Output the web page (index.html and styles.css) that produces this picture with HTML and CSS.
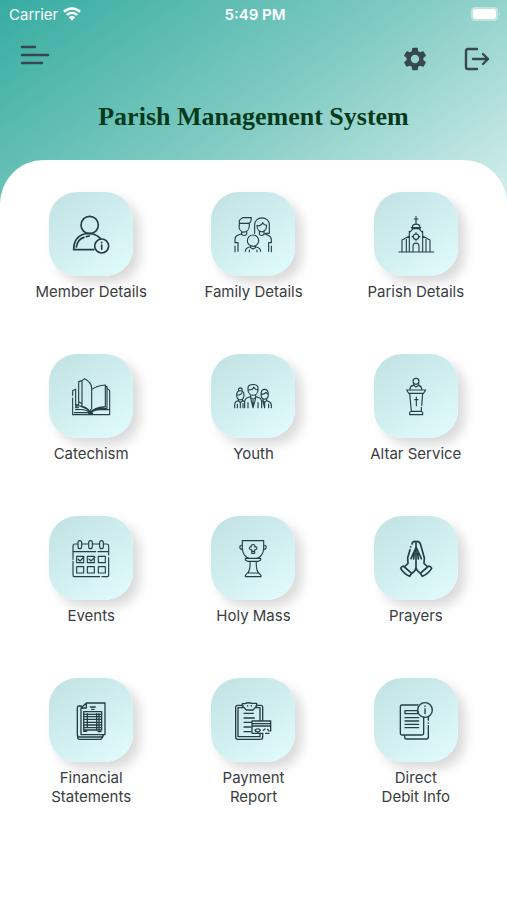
FILE: index.html
```html
<!DOCTYPE html>
<html lang="en">
<head>
<meta charset="utf-8">
<meta name="viewport" content="width=device-width, initial-scale=1">
<title>Parish Management System</title>
<link rel="stylesheet" href="styles.css">
</head>
<body>
<header class="header">
  <div class="status">
    <span class="carrier">Carrier
      <svg class="wifi" viewBox="0 0 56 42" aria-hidden="true"><path d="M3 14a36 36 0 0 1 50 0" stroke-width="8"/><path d="M12 24a23 23 0 0 1 32 0" stroke-width="7"/><path class="solid" d="M18 31q10-8 20 0L28 42z"/></svg>
    </span>
    <span class="time">5:49 PM</span>
    <svg class="battery" viewBox="0 0 30 14" aria-hidden="true"><rect class="shell" x="0" y="0" width="27" height="14" rx="4"/><rect class="charge" x="2" y="2" width="23" height="10" rx="3"/><path class="shell-tip" d="M28 5q2 2 0 4z"/></svg>
  </div>
  <div class="toolbar">
    <button class="tool menu" type="button" aria-label="Menu"><svg viewBox="0 0 30 20"><path d="M2 2h13M2 10h26M2 18h20"/></svg></button>
    <button class="tool settings" type="button" aria-label="Settings"><svg viewBox="0 0 24 24"><path d="M19.14 12.94c.04-.3.06-.61.06-.94s-.02-.64-.07-.94l2.03-1.58a.49.49 0 0 0 .12-.61l-1.92-3.32a.49.49 0 0 0-.59-.22l-2.39.96a7 7 0 0 0-1.62-.94l-.36-2.54a.48.48 0 0 0-.48-.41h-3.84a.47.47 0 0 0-.47.41l-.36 2.54a7.4 7.4 0 0 0-1.62.94l-2.39-.96a.48.48 0 0 0-.59.22L2.74 8.87a.47.47 0 0 0 .12.61l2.03 1.58a6 6 0 0 0 0 1.88l-2.03 1.58a.49.49 0 0 0-.12.61l1.92 3.32c.12.22.37.29.59.22l2.39-.96c.5.38 1.03.7 1.62.94l.36 2.54c.05.24.24.41.48.41h3.84c.24 0 .44-.17.47-.41l.36-2.54a7.4 7.4 0 0 0 1.62-.94l2.39.96c.22.08.47 0 .59-.22l1.92-3.32a.47.47 0 0 0-.12-.61zM12 15.6a3.6 3.6 0 1 1 0-7.2 3.6 3.6 0 0 1 0 7.2z"/></svg></button>
    <button class="tool logout" type="button" aria-label="Log out"><svg viewBox="0 0 26 24"><path d="M13 2H4Q2 2 2 4v16q0 2 2 2h9M9 12h15M19 7l5 5-5 5"/></svg></button>
  </div>
  <h1 class="title">Parish Management System</h1>
</header>
<main class="sheet">
  <nav class="grid" aria-label="Sections">
    <a class="item" href="#member"><span class="tile"><svg viewBox="129 105 114 114"><g stroke-width="5"><circle cx="182" cy="135" r="26"/><path d="M194 209H134c0-54 57-60 81-33M142 201c3-17 12-26 23-29M172 170l9-2"/><circle cx="218" cy="198" r="21"/><path d="M218 195v13M218 187v1"/></g></svg></span><span class="label">Member Details</span></a>
    <a class="item" href="#family"><span class="tile"><svg viewBox="120 105 114 114"><path d="M136 137v-16l10-8h26c0 10-3 17-10 17h-26M135 137c0 25 30 27 31-1v-6M143 154v9q7 7 15 0v-9M143 161l-12 5q-8 3-8 13v9h9v26M123 198v17M182 160v-26c0-27 44-27 44 0v26h-12M189 136c0 25 29 27 29-1M189 137q13 1 17-9 4 8 12 8M196 155v8q7 7 14 0v-8M213 162l12 5q7 3 7 13v8h-8v26M232 198v17"/><circle cx="177" cy="182" r="17"/><path d="M170 198v5q7 7 14 0v-5M167 201q-13 3-13 13M187 201q13 3 13 13M166 210v5M189 210v5"/></svg></span><span class="label">Family Details</span></a>
    <a class="item" href="#parish"><span class="tile"><svg viewBox="126 105 114 114"><path d="M183 110v22M178 117h11M172 148v-5c0-14 23-14 23 0v5M169 143h28M163 158l12-12h16l12 12M163 154v62M203 154v62M132 216h104M141 216v-36l21-11M225 216v-36l-21-11M154 178v38M213 178v38M174 216v-17c0-13 18-13 18 0v17"/><circle cx="183" cy="170" r="8"/><path d="M183 158v4M183 178v4M171 170h4M191 170h4"/></svg></span><span class="label">Parish Details</span></a>

    <a class="item" href="#catechism"><span class="tile"><svg viewBox="129 96 114 114"><path d="M185 203q-8-12-26-17v-79l8-6q20 11 21 27v64M159 107l-10 3v60l10 6M149 117v62q-8 0-9 3 34 0 45 21M140 133l-9 4v14M131 159v50h111v-73l-8-6M140 133v55h8M185 203q8-15 44-18v-65q-27 2-41 14M229 125l5-1v66h-20q-22 0-29 13M140 194q35-3 41 9h-45M188 203q6-9 25-9h26M185 194v15M179 205h12"/></svg></span><span class="label">Catechism</span></a>
    <a class="item" href="#youth"><span class="tile"><svg viewBox="120 96 114 114"><path d="M162 135v-6c0-14 30-14 30 0v6c0 21-30 21-30 0 12 0 17-4 17-9 3 6 6 9 13 9M170 150v7l7 6 8-6v-7M168 155l-11 5q-5 3-5 12v16M187 155l11 5q5 3 5 12v16M162 173v15M192 173v15M170 160l7 28 8-28M177 166v22M128 150c0-17 22-17 22 0 0 19-22 19-22 0 10 0 14-3 16-7M134 137c-4-11 14-11 10 0M134 163v5l5 5 6-5v-5M132 167l-7 4q-3 3-3 9v8M147 167l5 3M130 178v10M147 176v12M139 173v15M201 148c0-20 22-20 22 0 0 19-22 19-22 0q12 0 15-6 3 5 7 6M207 161v6l5 5 6-5v-6M219 167l8 4q5 3 5 10v7M224 177v11M206 167l6 21M212 173v15"/></svg></span><span class="label">Youth</span></a>
    <a class="item" href="#altar"><span class="tile"><svg viewBox="126 96 114 114"><circle cx="183" cy="109" r="9"/><path d="M176 115v6l7 5 8-5v-6M174 121q-9 2-9 12M191 121q9 2 9 12M155 135h57l-6 10h-45zM164 145l5 54M203 145l-3 36M199 187v12M168 199h31l4 3v7h-39v-7zM184 156v26"/><path d="M179 164h10"/></svg></span><span class="label">Altar Service</span></a>

    <a class="item" href="#events"><span class="tile"><svg viewBox="129 96 114 114"><rect x="147" y="101" width="11" height="24" rx="6"/><rect x="179" y="101" width="11" height="24" rx="6"/><rect x="212" y="101" width="11" height="24" rx="6"/><path d="M146 111h-8q-6 0-6 6v40M132 163v42q0 4 4 4h76M219 209h16q4 0 4-4v-53M239 144v-27q0-6-6-6h-9M159 111h19M191 111h20M133 134h67M207 134h31M143 148h21v19h-21zM175 148h21v19h-21zM208 148h21v19h-21zM143 179h21v19h-21zM175 179h21v19h-21zM208 179h21v19h-21zM147 156l6 6 12-12M180 156l6 6 12-12"/></svg></span><span class="label">Events</span></a>
    <a class="item" href="#mass"><span class="tile"><svg viewBox="120 96 114 114"><path d="M145 101h64v23c0 16-10 29-22 30h-20c-12-1-22-14-22-30zM145 115c-10-2-10 13 0 12M209 115c10-2 10 13 0 12M154 154h46v5l-7 4h-32l-7-4zM168 163c1 18 0 28-7 35M187 163c-1 18 0 28 7 35M160 198h34l7 7v4h-47v-4zM172 120c-4-10 14-10 10 0 9-3 9 10 0 8v11h-9v-11c-9 2-9-11-1-8zM173 133h9"/></svg></span><span class="label">Holy Mass</span></a>
    <a class="item" href="#prayers"><span class="tile"><svg viewBox="126 96 114 114"><g stroke-width="5"><path d="M183 104v77c0 7-5 13-11 17M180 103c-6 0-8 3-9 8M167 119v1M165 128l-7 24 1 17-8 8M186 103c7 0 9 3 11 10l11 40-1 16 8 8M183 122l-15 33M178 138l-2 18M184 122l15 33M188 138l2 18M183 181c0 7 6 13 12 17M145 177l25 22-6 9q-18-8-27-24 1-5 8-7zM221 177l-25 22 6 9q18-8 28-24-2-5-9-7z"/></g></svg></span><span class="label">Prayers</span></a>

    <a class="item" href="#financial"><span class="tile"><svg viewBox="129 93 114 114"><path stroke-width="4" d="M156 114l16-15h56v95h-72zM157 114h15V99M157 108h-7q-5 0-5 5v83q0 5 5 5h67q5 0 6-5v-2"/><path stroke-width="4" d="M146 196v6q0 6 6 6h62q5 0 8-12M184 111h15M188 118h7M164 125h54v55h-54zM164 133h54M164 140h54M164 148h54M164 157h54M164 165h54M164 173h54M175 131v42M203 131v50M210 131v50M164 184h9M207 185h9"/></svg></span><span class="label">Financial<br>Statements</span></a>
    <a class="item" href="#payment"><span class="tile"><svg viewBox="615 93 114 114"><path stroke-width="4" d="M642 106h-16q-6 0-6 6v90q0 6 6 6h69q6 0 6-6v-10M681 106h14q6 0 6 6v40M640 113h-13v87h66v-10M683 113h10v39M640 101h9q4-5 21-1h13v8l-11 12h-20l-12-12zM656 107v1M667 107v1M645 130h28M645 144h31M645 157h23M645 171h20M645 185h20M669 153h56v30M720 190h-10M702 190h-33v-37M669 161h56M669 168h56M678 181c3-6 14-6 16 0-3 7-14 6-16 0zM703 181l5-4M716 178l4 5"/></svg></span><span class="label">Payment<br>Report</span></a>
    <a class="item" href="#debit"><span class="tile"><svg viewBox="126 93 114 114"><g stroke-width="4"><path d="M189 105h-48q-5 0-5 5v80q0 5 5 5h60q5 0 5-5v-49M149 195v6q0 6 6 6h59q6 0 6-6v-34M220 159v1M220 151v-9M150 122h38v9h-38zM150 143h41M150 153h41M150 163h41M150 173h41"/><circle cx="210" cy="120" r="22"/><path d="M210 116v15M210 108v1"/></g></svg></span><span class="label">Direct<br>Debit Info</span></a>
  </nav>
</main>
</body>
</html>
```
FILE: styles.css
```css
* {
  box-sizing: border-box;
}

body {
  margin: 0;
  min-height: 100vh;
  background: #fff linear-gradient(145deg, #36aca1 0%, #81cbc3 52%, #d6efed 100%) no-repeat top / 100% 208px;
  font-family: Inter, "Liberation Sans", sans-serif;
  color: #3a3d3e;
}

svg {
  display: block;
  overflow: visible;
  fill: none;
  stroke: currentColor;
  stroke-linecap: round;
  stroke-linejoin: round;
}

.header {
  height: 160px;
}

.status {
  display: grid;
  grid-template-columns: 1fr auto 1fr;
  align-items: center;
  height: 28px;
  padding: 0 6px 0 9px;
  color: #fff;
  font-size: 15px;
}

.carrier {
  display: flex;
  align-items: center;
  gap: 5px;
}

.wifi {
  width: 18px;
  height: 14px;
  stroke-linecap: butt;
}

.wifi .solid {
  fill: #fff;
  stroke: none;
}

.time {
  font-weight: 600;
}

.battery {
  justify-self: end;
  width: 30px;
  height: 14px;
  stroke: none;
}

.shell,
.shell-tip {
  fill: rgba(255, 255, 255, 0.4);
}

.charge {
  fill: #fff;
}

.toolbar {
  display: flex;
  align-items: center;
  height: 62px;
  padding: 0 17px 0 20px;
}

.tool {
  padding: 0;
  border: 0;
  background: none;
  color: #37474f;
  cursor: pointer;
}

.menu {
  margin: 0 auto 8px 0;
}

.menu svg {
  width: 30px;
  height: 20px;
  stroke-width: 2.4;
}

.settings svg {
  width: 28px;
  height: 28px;
  fill: currentColor;
  stroke: none;
}

.logout {
  margin-left: 35px;
}

.logout svg {
  width: 26px;
  height: 24px;
  stroke-width: 2.4;
}

.title {
  margin: 10px 0 0;
  text-align: center;
  font: bold 26px/34px "Liberation Serif", serif;
  color: #053b1c;
}

.sheet {
  padding: 32px 10px 40px;
  border-radius: 44px 44px 0 0;
  background: #fff;
}

.grid {
  display: grid;
  grid-template-columns: repeat(3, 1fr);
  grid-auto-rows: minmax(126px, auto);
  row-gap: 36px;
}

.item {
  display: flex;
  flex-direction: column;
  align-items: center;
  gap: 6px;
  color: inherit;
  text-align: center;
  text-decoration: none;
}

.tile {
  display: grid;
  place-items: center;
  width: 84px;
  height: 84px;
  border-radius: 28px;
  background: linear-gradient(145deg, #c0e1e3, #e2fcfc);
  box-shadow: 7px 7px 12px rgba(0, 0, 0, 0.15);
  color: #263f43;
}

.tile svg {
  width: 38px;
  height: 38px;
  stroke-width: 3.4;
}

.label {
  font-size: 15px;
  line-height: 19px;
}
```
